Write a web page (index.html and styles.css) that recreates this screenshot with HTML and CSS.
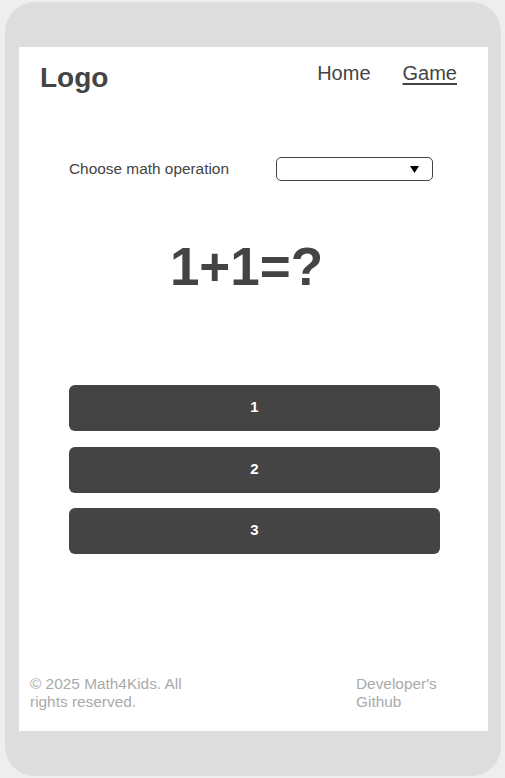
FILE: index.html
```html
<!DOCTYPE html>
<html lang="en">
<head>
<meta charset="utf-8">
<title>Math4Kids</title>
<link rel="stylesheet" href="styles.css">
</head>
<body>
<div class="phone">
  <div class="screen">
    <header class="header">
      <div class="logo">Logo</div>
      <nav class="nav">
        <a class="nav-link">Home</a>
        <a class="nav-link active">Game</a>
      </nav>
    </header>
    <main class="main">
      <div class="op-row">
        <span class="op-label">Choose math operation</span>
        <div class="select">
          <svg class="caret" width="9" height="7" viewBox="0 0 9 7"><path d="M0 0 H9 L4.5 7 Z" fill="#000"/></svg>
        </div>
      </div>
      <h1 class="question">1+1=?</h1>
      <div class="answers">
        <button class="answer">1</button>
        <button class="answer">2</button>
        <button class="answer">3</button>
      </div>
    </main>
    <footer class="footer">
      <div class="copy">© 2025 Math4Kids. All rights reserved.</div>
      <div class="dev">Developer's Github</div>
    </footer>
  </div>
</div>
</body>
</html>
```

FILE: styles.css
```css
html, body {
  margin: 0;
  padding: 0;
}
body {
  background: #eeeeee;
  font-family: "Liberation Sans", Arial, sans-serif;
  color: #444444;
}
.phone {
  box-sizing: border-box;
  margin: 2px 0 0 5px;
  width: 496px;
  height: 774px;
  background: #dddddd;
  border-radius: 30px;
  padding: 45px 13px 45px 14px;
}
.screen {
  background: #ffffff;
  height: 684px;
  display: flex;
  flex-direction: column;
}
.header {
  display: flex;
  justify-content: space-between;
  align-items: flex-start;
  padding: 15px 31px 0 21px;
}
.logo {
  font-size: 28px;
  font-weight: bold;
  line-height: 32px;
}
.nav {
  display: flex;
  gap: 32px;
}
.nav-link {
  font-size: 20px;
  line-height: 23px;
  color: #444444;
  text-decoration: none;
}
.nav-link.active {
  text-decoration: underline;
  text-underline-offset: 3px;
}
.main {
  flex: 1;
  padding: 0 48px 0 50px;
}
.op-row {
  margin-top: 63px;
  display: flex;
  justify-content: space-between;
  align-items: center;
  padding-right: 7px;
}
.op-label {
  font-size: 15.4px;
}
.select {
  box-sizing: border-box;
  width: 157px;
  height: 24px;
  border: 1px solid #444444;
  border-radius: 5px;
  display: flex;
  align-items: center;
  justify-content: flex-end;
  padding-right: 13px;
}
.caret {
  display: block;
}
.question {
  margin: 57px 0 0;
  text-align: center;
  font-size: 53px;
  line-height: 58px;
  font-weight: bold;
  padding-right: 16px;
}
.answers {
  margin-top: 89px;
  display: flex;
  flex-direction: column;
  gap: 15.5px;
}
.answer {
  height: 46px;
  border: none;
  border-radius: 6px;
  background: #444444;
  color: #ffffff;
  font-family: "Liberation Sans", Arial, sans-serif;
  font-size: 15px;
  font-weight: bold;
  padding: 0 0 3px;
}
.footer {
  display: flex;
  justify-content: space-between;
  padding: 0 12px 20px 11px;
  font-size: 15.4px;
  line-height: 18px;
  color: #aaaaaa;
}
.copy {
  width: 165px;
}
.dev {
  width: 120px;
}
```
